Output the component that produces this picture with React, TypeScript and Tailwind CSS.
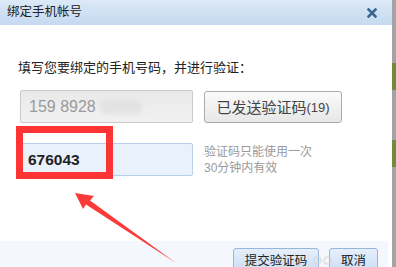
const font = "font-['Liberation_Sans','Noto_Sans_CJK_SC',sans-serif]";

function CloseIcon() {
  return (
    <svg width="10" height="10" viewBox="0 0 10 10" className="block">
      <path d="M1.5 1.5 L8.5 8.5 M8.5 1.5 L1.5 8.5" stroke="#3b6690" strokeWidth="2.6" strokeLinecap="square" />
    </svg>
  );
}

function Arrow() {
  return (
    <svg className="pointer-events-none absolute left-0 top-0" width="396" height="267" viewBox="0 0 396 267">
      <polygon points="75,193 94,196 90,200.5 176,263 86,204.5 83,209" fill="#fd3a3a" />
    </svg>
  );
}

export default function App() {
  return (
    <div className={`relative flex h-[267px] w-[396px] overflow-hidden bg-white ${font}`}>
      <div className="flex w-[392px] flex-col">
        <div className="flex h-[25px] shrink-0 items-center justify-between bg-gradient-to-b from-[#dce9f7] to-[#c4d9f0] pl-[7px] pr-[15px]">
          <span className="text-[12.5px] leading-none text-[#222]">绑定手机帐号</span>
          <CloseIcon />
        </div>

        <div className="flex flex-1 flex-col pt-[34px]">
          <p className="ml-[18px] text-[13px] leading-[18px] text-[#222]">填写您要绑定的手机号码，并进行验证：</p>

          <div className="ml-[20px] mt-[13px] flex items-start">
            <div className="flex h-[33px] w-[173px] items-center overflow-hidden rounded-[2px] border border-[#c9c9c9] bg-gradient-to-b from-[#e9e9e9] to-[#f1f1f1] pl-[8px]">
              <span className="text-[16px] leading-none text-[#9a9a9a]">159 8928</span>
              <span className="ml-[4px] h-[14px] w-[42px] rounded-[6px] bg-[#e2e2e2] blur-[2px]" />
            </div>
            <button
              type="button"
              className="ml-[11px] mt-[1px] flex h-[32px] w-[138px] items-center justify-center rounded-[3px] border border-[#ababab] bg-gradient-to-b from-[#fbfbfb] to-[#e7e7e7] text-[15px] leading-none text-[#444]"
            >
              已发送验证码<span className="text-[13px]">(19)</span>
            </button>
          </div>

          <div className="ml-[20px] mt-[20px] flex items-start">
            <div className="flex h-[33px] w-[173px] items-center rounded-[2px] border border-[#b9d0ea] bg-[#e8f1fc] pl-[7px]">
              <span className="text-[15.5px] font-bold leading-none text-[#222]">676043</span>
            </div>
            <div className="ml-[11px] mt-[1px] text-[12px] leading-[16px] text-[#9a9a9a]">
              <p>验证码只能使用一次</p>
              <p>30分钟内有效</p>
            </div>
          </div>

          <div className="mr-[4px] mt-auto flex h-[26px] items-start justify-end gap-[10px] bg-[#f4f7fb] pr-[10px] pt-[7px]">
            <button
              type="button"
              className="h-[26px] w-[86px] rounded-[3px] border border-[#97b6db] bg-gradient-to-b from-[#e6effa] to-[#c9dcf3] text-[12.5px] text-[#222]"
            >
              提交验证码
            </button>
            <button
              type="button"
              className="h-[26px] w-[49px] rounded-[3px] border border-[#97b6db] bg-gradient-to-b from-[#e6effa] to-[#c9dcf3] text-[12.5px] text-[#222]"
            >
              取消
            </button>
          </div>
        </div>
      </div>

      <div className="flex w-[4px] flex-col bg-[#a3a3a3]">
        <div className="h-[63px]" />
        <div className="h-[27px] bg-[#6f8c3e]" />
        <div className="h-[50px]" />
        <div className="h-[27px] bg-[#6f8c3e]" />
      </div>

      <div className="pointer-events-none absolute left-[16px] top-[126px] h-[53px] w-[97px] border-[7px] border-[#ff3434]" />
      <div className="pointer-events-none absolute left-[313px] top-[256px] flex gap-[1px] opacity-60">
        <span className="h-[9px] w-[9px] rounded-full border-2 border-[#d8d8d8]" />
        <span className="h-[9px] w-[9px] rounded-full border-2 border-[#d8d8d8]" />
      </div>
      <Arrow />
    </div>
  );
}
